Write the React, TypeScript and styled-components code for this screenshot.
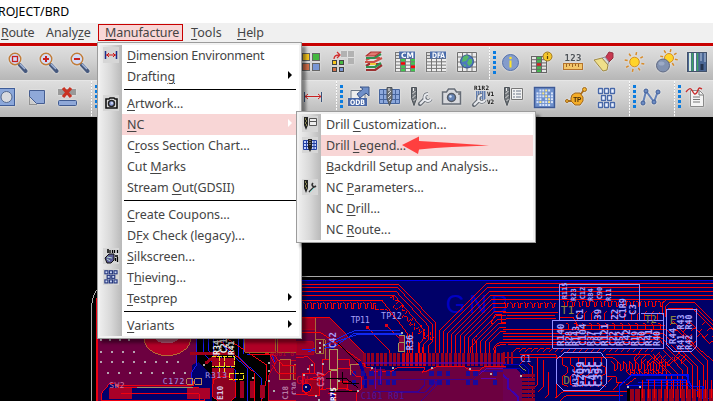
import React from "react";
import styled, { createGlobalStyle, css } from "styled-components";

const Global = createGlobalStyle`
  html, body { margin: 0; padding: 0; overflow: hidden; background: #000; }
  * { box-sizing: border-box; }
  svg { display: block; }
`;

const Window = styled.div`
  position: relative;
  display: flex;
  flex-direction: column;
  width: 713px;
  height: 401px;
  overflow: hidden;
  background: #000;
  font-family: "Noto Sans", "Open Sans", sans-serif;
  font-size: 12.5px;
  color: #444;
  white-space: nowrap;
`;

const TitleBar = styled.header`
  flex: none;
  height: 23px;
  background: #fff;
  color: #000;
  font-size: 12.3px;
  line-height: 23px;
  span { margin-left: -2px; }
`;

const MenuBar = styled.nav`
  flex: none;
  display: flex;
  align-items: flex-start;
  height: 20px;
  padding-top: 1px;
  background: #f0f0f0;
`;

const MenuTitle = styled.div<{ $width: number; $pad: number; $open?: boolean }>`
  width: ${(p) => p.$width}px;
  height: 17px;
  padding-left: ${(p) => p.$pad}px;
  line-height: 16px;
  border: 1px solid transparent;
  ${(p) =>
    p.$open &&
    css`
      border-color: #c80000;
      background: #f8d6d6;
    `}
`;

const RedRule = styled.div`
  flex: none;
  height: 3px;
  background: #c80000;
`;

const Toolbar = styled.div<{ $height: number }>`
  flex: none;
  display: flex;
  height: ${(p) => p.$height}px;
  border-top: 1px solid #e6e6e6;
  background: linear-gradient(#dedede, #d0d0d0 45%, #b6b6b6);
`;

const IconGroup = styled.div<{ $left: number }>`
  display: flex;
  flex: none;
  margin-left: ${(p) => p.$left}px;
`;

const Cell = styled.svg`
  flex: none;
  width: 31px;
  height: 34px;
  filter: drop-shadow(0 0 1px #ececec);
`;

const Divider = styled.div<{ $left: number }>`
  flex: none;
  width: 1px;
  margin-left: ${(p) => p.$left}px;
  background: repeating-linear-gradient(#fafafa 0 2px, #c4c4c4 2px 3px);
`;

const Handle = styled.div`
  flex: none;
  width: 3px;
  height: 24px;
  margin: 4px 0 0 3px;
  background: repeating-linear-gradient(#0a7ce0 0 3px, transparent 3px 5px);
`;

const Canvas = styled.svg`
  flex: none;
  width: 713px;
  height: 284px;
`;

const Popup = styled.div<{ $x: number; $y: number; $w: number }>`
  position: absolute;
  left: ${(p) => p.$x}px;
  top: ${(p) => p.$y}px;
  width: ${(p) => p.$w}px;
  padding: 2px;
  border: 1px solid #9c9c9c;
  background: #f2f2f2;
  box-shadow: 4px 4px 3px rgba(0, 0, 0, 0.42);
`;

const Items = styled.div<{ $gutter: number }>`
  background: linear-gradient(
    90deg,
    #ededed 0,
    #d8d8d8 ${(p) => p.$gutter * 0.5}px,
    #b9b9b9 ${(p) => p.$gutter}px,
    #fff ${(p) => p.$gutter}px
  );
`;

const Item = styled.div<{ $gutter: number }>`
  display: grid;
  grid-template-columns: ${(p) => p.$gutter}px 1fr;
  height: 21px;
  svg.glyph { margin: 2px 0 0 3px; }
`;

const ItemBody = styled.div<{ $hot?: boolean }>`
  display: flex;
  align-items: center;
  justify-content: space-between;
  padding: 1px 7px 0 5px;
  line-height: 20px;
  background: ${(p) => (p.$hot ? "#f8d6d6" : "transparent")};
`;

const Text = styled.span<{ $gap: number }>`
  letter-spacing: ${(p) => p.$gap}px;
`;

const Mnemonic = styled.span`
  text-decoration: underline;
  text-decoration-thickness: 1px;
  text-underline-offset: 2px;
`;

const Chevron = styled.div<{ $hot?: boolean }>`
  width: 0;
  height: 0;
  margin-top: -5px;
  border: 4px solid transparent;
  border-left: 4px solid ${(p) => (p.$hot ? "#fff" : "#000")};
  border-right: 0;
`;

const Separator = styled.div`
  height: 6px;
  padding: 2px 3px 0 24px;
  &::before { content: ""; display: block; height: 1px; background: #000; }
`;

const Pointer = styled.svg`
  position: absolute;
  left: 402px;
  top: 136px;
`;

function Label({ text, gap = -0.06 }: { text: string; gap?: number }) {
  const i = text.indexOf("&");
  return (
    <Text $gap={gap}>
      {text.slice(0, i)}
      <Mnemonic>{text[i + 1]}</Mnemonic>
      {text.slice(i + 2)}
    </Text>
  );
}

/* ---------- toolbar glyphs, 31x34 box centred on 15.5,16 ---------- */

const Lens = ({ mark }: { mark: React.ReactNode }) => (
  <>
    <path d="M19 18l5.500 6" stroke="#46597e" strokeWidth="4" strokeLinecap="round" />
    <path d="M19 17l5 5" stroke="#a4b6d8" strokeWidth="1.600" />
    <circle cx="14" cy="12" r="5.800" fill="#d3dcf6" stroke="#c07c38" strokeWidth="1.400" />
    {mark}
  </>
);

const GridTable = ({ title }: { title: string }) => (
  <>
    <rect x="6" y="5" width="20" height="20" fill="#777" />
    {[0, 1, 2, 3].map((r) =>
      [0, 1, 2, 3].map((c) => {
        const k = title === "CM" ? (c === 1 || c === 3 ? "#40c850" : "#eee") : "#eee";
        const red = title === "CM" && ((c === 1 && r === 1) || (c === 3 && r === 2));
        return <rect key={`${r}${c}`} x={7 + c * 5} y={12 + r * 3.300} width="4" height="2.300" fill={red ? "#f00" : k} />;
      })
    )}
    <path d="M7 6h3v2H7zM7 9h3v2H7z" fill="#ddd" />
    <rect x="10" y="4.500" width="16" height="7" fill="#4a6cab" />
    <text x="18.500" y="10.700" fontSize="7.500" fontWeight="700" fontFamily="DejaVu Sans, sans-serif" textAnchor="middle" fill="#fff" textLength="13" lengthAdjust="spacingAndGlyphs">
      {title}
    </text>
  </>
);

const Drill = ({ x = 7 }: { x?: number }) => (
  <g>
    <path d={`M${x} 6.500h5v11l-2.500 7-2.500-7z`} fill="#70757a" stroke="#4c5258" />
    <path d={`M${x + 1} 13l3-3M${x + 1} 17l3-3M${x + 2} 20l2-2`} stroke="#ddd" />
    <path d={`M${x + 2} 7v3`} stroke="#eee" />
  </g>
);

const Wrench = ({ x = 17, y = 12 }: { x?: number; y?: number }) => (
  <g transform={`translate(${x} ${y})`} fill="none">
    <path d="M1 11l5-5" stroke="#686e76" strokeWidth="4.400" strokeLinecap="round" />
    <path d="M9 1a3.500 3.500 0 1 0 3 5" stroke="#686e76" strokeWidth="3.400" />
    <path d="M1 11l5-5M9 1a3.500 3.500 0 1 0 3 5" stroke="#e8eaee" strokeWidth="2" />
  </g>
);

const Pads = () => (
  <g fill="#eef3ff" stroke="#4868a8" strokeWidth="1.400">
    {[0, 1, 2].map((r) =>
      (r === 1 ? [3, 9] : [0, 6, 12]).map((x) => (
        <rect key={`${r}${x}`} x={x + 0.500} y={r * 7 + 0.500} width="4" height="5" rx=".5" />
      ))
    )}
  </g>
);

const Ball = () => (
  <>
    <circle cx="13" cy="18.500" r="6.500" fill="#8292b0" stroke="#5d6780" />
    <ellipse cx="11.500" cy="16.500" rx="3" ry="2" fill="#9dabc6" />
  </>
);

const Rays = ({ cx, cy, r }: { cx: number; cy: number; r: number }) => (
  <>
    {[0, 45, 90, 135, 180, 225, 270, 315].map((a) => (
      <path key={a} transform={`rotate(${a + 12} ${cx} ${cy})`} d={`M${cx + r} ${cy}h3`} stroke="#d88a28" strokeWidth="1.500" />
    ))}
  </>
);

const icons: Record<string, React.ReactNode> = {
  zoomFit: <Lens mark={<rect x="11.500" y="9.500" width="5" height="5" fill="none" stroke="#c82020" strokeWidth="1.300" />} />,
  zoomIn: <Lens mark={<path d="M11 12h6M14 9v6" stroke="#c82020" strokeWidth="2" />} />,
  zoomOut: <Lens mark={<path d="M11 12h6" stroke="#c82020" strokeWidth="2" />} />,
  tiles: (
    <g stroke="#666">
      <rect x="6.500" y="6.500" width="7" height="7" fill="#f8c81c" /><rect x="16.500" y="6.500" width="7" height="7" fill="#45b840" />
      <rect x="6.500" y="16.500" width="7" height="7" fill="#d4704a" /><rect x="16.500" y="16.500" width="7" height="7" fill="#7896d4" />
    </g>
  ),
  moveTiles: (
    <g>
      <g fill="#b2b2b2"><rect x="14" y="4" width="6" height="6" /><rect x="21" y="4" width="6" height="6" /><rect x="21" y="11" width="6" height="6" /></g>
      <g stroke="#444"><rect x="5.500" y="13.500" width="4" height="4" fill="#f8c81c" /><rect x="12.500" y="13.500" width="4" height="4" fill="#45b840" />
      <rect x="5.500" y="20.500" width="4" height="4" fill="#d4704a" /><rect x="12.500" y="20.500" width="4" height="4" fill="#7896d4" /></g>
      <path d="M7 12c0-3 2-4 5-4M10 5l3 3-3 3" stroke="#d03030" strokeWidth="1.300" fill="none" />
    </g>
  ),
  layers: (
    <g fill="none" strokeLinejoin="round">
      <path d="M8 23h9l7-5M8 19l3-2h12" stroke="#9c3030" strokeWidth="2.200" />
      <path d="M8 20h9l6-4" stroke="#2d9150" strokeWidth="2.200" />
      <path d="M7 15h9l8-4M8 13l4-2h10" stroke="#cd5048" strokeWidth="2.200" />
      <path d="M12 17h6" stroke="#f0c83a" strokeWidth="2" />
      <path d="M8 11h8l7-4" stroke="#2d9150" strokeWidth="2.200" />
      <path d="M8 9l5-4h10l-6 4z" stroke="#b03434" fill="#e07a70" strokeWidth="1.200" />
    </g>
  ),
  cm: <GridTable title="CM" />,
  dfa: <GridTable title="DFA" />,
  globe: (
    <g>
      <path d="M6.500 5.500v19h19v-19zM6 10h20M6 15h20M6 20h20M11.500 6v18M16 6v18M21 6v18" fill="#ececec" stroke="#707070" />
      <circle cx="16" cy="14.500" r="6.500" fill="#4c79bd" stroke="#34558f" />
      <path d="M12 10l4-2 2 2-3 4-4 1zM18 12l3 0v4l-3 3-2-3zM12 17l3 1-1 2z" fill="#55b868" />
    </g>
  ),
  info: (
    <>
      <circle cx="15.500" cy="15.500" r="8" fill="#849ccb" stroke="#5470a8" />
      <circle cx="15.500" cy="11" r="1.300" fill="#ffe428" /><path d="M15.500 13.500v7" stroke="#ffe428" strokeWidth="2" />
    </>
  ),
  tableInfo: (
    <>
      <rect x="5" y="9" width="16" height="17" fill="#666" />
      {[0, 1, 2, 3, 4].map((r) => [0, 1, 2].map((c) => (
        <rect key={`${r}${c}`} x={6 + c * 5} y={10 + r * 3.200} width="4" height="2.200" fill={c === 1 ? (r === 2 ? "#e02020" : "#45b850") : "#e5e5e5"} />
      )))}
      <circle cx="21.500" cy="9.500" r="4.500" fill="#f5c62c" stroke="#9a7420" /><path d="M21.500 9v3M21.500 6.500v1" stroke="#543c08" strokeWidth="1.200" />
    </>
  ),
  ruler: (
    <>
      <text x="16" y="13.500" fontSize="9" fontWeight="700" fontFamily="DejaVu Sans Mono, monospace" textAnchor="middle" fill="#4e5358" textLength="17">123</text>
      <rect x="6.500" y="16.500" width="19" height="6" fill="#f3c66a" stroke="#b5732c" />
      <path d="M9.500 17v3M12.500 17v2M15.500 17v3M18.500 17v2M21.500 17v3" stroke="#9c6424" />
    </>
  ),
  brush: (
    <>
      <path d="M17 11l4-6 4 1 0 5-5 5z" fill="#c83850" stroke="#943040" />
      <path d="M14 11l3-1 4 5-2 4z" fill="#d8d8dc" stroke="#8a8a94" />
      <path d="M6 13l8-2 6 7-1 5-4 1z" fill="#efdf8a" stroke="#9e8844" />
    </>
  ),
  sun: <><Rays cx={15.500} cy={15} r={7} /><circle cx="15.500" cy="15" r="4.800" fill="#ffd42a" stroke="#d08c26" /></>,
  shade: <><Rays cx={19} cy={11} r={6} /><circle cx="19" cy="11" r="4.500" fill="#ffd42a" stroke="#d08c26" /><Ball /></>,
  bars: (
    <g>
      <rect x="6.500" y="5.500" width="19" height="19" fill="#4b6795" stroke="#43526a" />
      <path d="M9 6v18" stroke="#d8ecdf" strokeWidth="2" /><path d="M11.500 6v18M16.500 6v18" stroke="#40a060" strokeWidth="1.500" />
      <path d="M14 6v18" stroke="#eef" strokeWidth="2" /><path d="M20 6v8M24 6v9" stroke="#8197ba" strokeWidth="2" /><path d="M21 17v6" stroke="#25344e" strokeWidth="3" />
    </g>
  ),
  circleBox: <><rect x="7.500" y="7.500" width="16" height="17" fill="#8ba7da" stroke="#3f5d99" /><circle cx="15.500" cy="16" r="5.500" fill="#d8dadf" stroke="#54698f" /></>,
  note: <><path d="M7.500 9.500h15v13h-8l-7-7z" fill="#8fa8d8" stroke="#455d91" /><path d="M7.500 15.500v8h8" fill="none" stroke="#555" strokeDasharray="1 1" /></>,
  removeShape: (
    <>
      <rect x="5" y="8" width="18" height="6" fill="#999" />
      <path d="M10 7l8 9M18 7l-8 9" stroke="#c93222" strokeWidth="3.200" />
      <rect x="5.500" y="19.500" width="18" height="5" rx="1" fill="#8fa8d8" stroke="#3f5a90" />
    </>
  ),
  dimension: <><path d="M7.500 11v10M24.500 11v10" stroke="#39547c" /><path d="M8 15.500h16M11 13l-3 2.500 3 2.500M21 13l3 2.500-3 2.500" stroke="#c82020" fill="none" /></>,
  odb: (
    <>
      <path d="M8 9.500h14v15H8z" fill="#eee" stroke="#6c7888" />
      <path d="M14 13l6-5-3-2h9v9l-3-3-6 5z" fill="#6f8fc8" stroke="#3c5688" />
      <rect x="5" y="17" width="19" height="8" fill="#4767a8" />
      <text x="14.500" y="23.800" fontSize="7.500" fontWeight="700" fontFamily="DejaVu Sans, sans-serif" textAnchor="middle" textLength="15" lengthAdjust="spacingAndGlyphs" fill="#fff">ODB</text>
    </>
  ),
  drillBox: <><path d="M5.500 8.500h20v14h-20zM5 13.500h21M5 18.500h21M9.500 8v15M21.500 8v15" fill="#8ca8dc" stroke="#46659e" /><Drill x={13} /></>,
  drillWrench: <><Drill x={6.500} /><Wrench x={14} y={12} /></>,
  camera: (
    <g>
      <path d="M6.500 11h4l2-3h6l2 3h4v12h-18z" fill="#d9dade" stroke="#666c76" strokeWidth="1.500" />
      <circle cx="15.500" cy="16.500" r="4" fill="#6683b4" stroke="#555b65" strokeWidth="1.500" /><circle cx="14.500" cy="15.500" r="1.200" fill="#d7e6fc" />
      <path d="M22 13h2" stroke="#444" />
    </g>
  ),
  silk: (
    <g>
      <path d="M9 11h10M9 13h10M9 15h10M9 17h10M9.500 10v11M11.500 10v11M13.500 10v11M15.500 10v11M17.500 10v11" stroke="#4b6da8" strokeWidth=".8" />
      <Wrench x={6} y={13} />
      <g fontSize="6" fontWeight="700" fontFamily="DejaVu Sans Mono, monospace" fill="#111"><text x="7" y="9" textLength="15">R1R2</text><text x="20" y="15" textLength="7">V1</text><text x="20" y="23" textLength="7">V2</text></g>
    </g>
  ),
  drillDoc: <><Drill x={6.500} /><path d="M13.500 7.500h11v11h-11z" fill="#f2f2f2" stroke="#777" /><path d="M15 10h2M18 10h5M15 13h2M18 13h5M15 16h2M18 16h5" stroke="#6d7788" /></>,
  matrix: (
    <>
      <rect x="5.500" y="6.500" width="20" height="20" fill="#6f91cd" stroke="#3e5a96" strokeWidth="1.500" />
      {Array.from({ length: 36 }, (_, i) => (
        <rect key={i} x={7.500 + (i % 6) * 2.900} y={8.500 + Math.floor(i / 6) * 2.900} width="2" height="2" fill={[3, 8, 15, 22, 25, 28].includes(i) ? "#ffe97a" : i % 5 === 0 ? "#6f91cd" : "#d9e4fa"} />
      ))}
    </>
  ),
  testPoint: (
    <>
      <path d="M6 20h5M20 14l4-5" stroke="#a86d1e" strokeWidth="2" /><circle cx="24.500" cy="8.500" r="2" fill="#f4b733" stroke="#9e651c" /><circle cx="7" cy="20" r="1.500" fill="#f4b733" stroke="#9e651c" />
      <path d="M12 14l3-2h5l3 4v4l-3 4h-5l-4-4v-3z" fill="#f4ad28" stroke="#9e651c" />
      <text x="17.300" y="20.500" fontSize="6.500" fontWeight="700" fontFamily="Liberation Sans, sans-serif" textAnchor="middle" fill="#4b2e08">TP</text>
    </>
  ),
  pads: <g transform="translate(7 7)"><Pads /></g>,
  net: <><path d="M8 22l3-12 8 11 4-11" fill="none" stroke="#6381b8" strokeWidth="2" /><g fill="#6c8bc2" stroke="#415f99"><circle cx="8" cy="22" r="2" /><circle cx="11" cy="10" r="2" /><circle cx="19" cy="21" r="2" /><circle cx="23" cy="11" r="2" /></g></>,
  report: <><path d="M10.500 9.500h9l4 4v12h-13z" fill="#f4f4f4" stroke="#8a8a8a" /><path d="M19 10v4h4M13 16h7M13 18.500h7M13 21h7" stroke="#777" fill="none" /><path d="M6 11c4-5 5-4 7 0s4 1 5-2 2-2 4-1" stroke="#c83030" strokeWidth="1.400" fill="none" /></>,
};

const Icons = ({ names, left }: { names: string[]; left: number }) => (
  <IconGroup $left={left}>
    {names.map((n) => (
      <Cell key={n} viewBox="0 0 31 34">{icons[n]}</Cell>
    ))}
  </IconGroup>
);

/* ---------- 16px menu glyphs ---------- */

const DrillMini = () => (
  <><path d="M2 1h4v8l-2 5-2-5z" fill="#222" /><path d="M3 3h1M4 5h1M3 7h1M4 9h1" stroke="#e8e27a" /></>
);

const menuGlyphs: Record<string, React.ReactNode> = {
  dim: <><path d="M2.500 4v8M13.500 4v8" stroke="#1c2c88" strokeWidth="1.500" /><path d="M3 8h10M6 6L4 8l2 2M10 6l2 2-2 2" stroke="#d01010" fill="none" /></>,
  art: <><path d="M3 4h3l1-1h4l1 1h2v9H3z" fill="#ddd" stroke="#111" strokeWidth="1.600" /><circle cx="8.500" cy="8.500" r="3" fill="#90a0d8" stroke="#222" strokeWidth="1.500" /><path d="M8 8h2" stroke="#fff" /></>,
  silk: <><path d="M4 2h2M4 4h2M7 2v3M9.500 2v3M11.500 2v3M14.500 2v3M12 8h3M14.500 9v5M12.500 10v3" stroke="#000" strokeWidth="1.300" /><path d="M2 10l4-4 5 0v6l-3 3H4z" fill="#5b5b95" stroke="#111" /><path d="M4 9l5 1M4 11l3 2" stroke="#b5e0d0" /></>,
  pads: <g transform="translate(1.500 1) scale(.76)" fill="#cbd7f5" stroke="#24367e" strokeWidth="1.500">{[0, 1, 2].map((r) => (r === 1 ? [3, 9] : [0, 6, 12]).map((x) => <rect key={`${r}${x}`} x={x + 0.500} y={r * 6 + 1} width="4" height="4" />))}</g>,
  custom: <><DrillMini /><path d="M7.500 2.500h7v7h-7zM7 5.500h8" fill="#eee" stroke="#555" /></>,
  legend: <><path d="M1.500 3.500h13v9h-13zM1 6.500h14M1 9.500h14M4.500 3v10M12 3v10" fill="#c4d2ff" stroke="#2340a0" /><path d="M6 2h4v9l-2 4-2-4z" fill="#222" /><path d="M8 3v6" stroke="#bbb" strokeDasharray="1 1" /></>,
  params: <><DrillMini /><path d="M7 13l5-5M11 4c-2 2 0 5 3 3" stroke="#333" strokeWidth="1.600" fill="none" /><path d="M8 13l4-4" stroke="#79d2cb" /></>,
};

type Entry = { text?: string; glyph?: string; sub?: boolean; hot?: boolean; gap?: number };

const manufacture: Entry[] = [
  { text: "&Dimension Environment", glyph: "dim", gap: -0.22 },
  { text: "Draftin&g", sub: true },
  {},
  { text: "&Artwork...", glyph: "art" },
  { text: "&NC", sub: true, hot: true },
  { text: "C&ross Section Chart..." },
  { text: "Cut &Marks" },
  { text: "Stream &Out(GDSII)" },
  {},
  { text: "&Create Coupons..." },
  { text: "D&Fx Check (legacy)..." },
  { text: "&Silkscreen...", glyph: "silk" },
  { text: "T&hieving...", glyph: "pads" },
  { text: "&Testprep", sub: true },
  {},
  { text: "&Variants", sub: true },
];

const numericControl: Entry[] = [
  { text: "Drill &Customization...", glyph: "custom" },
  { text: "Drill &Legend...", glyph: "legend", hot: true },
  { text: "&Backdrill Setup and Analysis..." },
  { text: "NC &Parameters...", glyph: "params" },
  { text: "NC &Drill..." },
  { text: "NC &Route..." },
];

const Menu = ({ entries, gutter }: { entries: Entry[]; gutter: number }) => (
  <Items $gutter={gutter}>
    {entries.map((e, i) =>
      e.text ? (
        <Item key={i} $gutter={gutter}>
          {e.glyph ? (
            <svg className="glyph" width="16" height="16" viewBox="0 0 16 16">
              <rect width="16" height="16" fill="#d6d6d6" />
              {menuGlyphs[e.glyph]}
            </svg>
          ) : (
            <span />
          )}
          <ItemBody $hot={e.hot}>
            <Label text={e.text} gap={e.gap} />
            {e.sub && <Chevron $hot={e.hot} />}
          </ItemBody>
        </Item>
      ) : (
        <Separator key={i} />
      )
    )}
  </Items>
);

/* ---------- board artwork; each region uses a 3x sub-pixel grid ---------- */

const range = (n: number) => Array.from({ length: n }, (_, i) => i);

const meander = (x: number, y: number, n: number, w: number, h: number) =>
  range(n)
    .map((i) => `M${x + i * w} ${y}l6 4v${h - 4}h5M${x + i * w + w * 0.6} ${y + h - 3}v${-h + 6}h5`)
    .join("");

const VText = ({ x, y, s, children, c = "#a8a2ff" }: { x: number; y: number; s: number; children: string; c?: string }) => (
  <text transform={`translate(${x} ${y}) rotate(-90)`} fontSize={s} fontWeight="700" fill={c} stroke="none">{children}</text>
);

const LeftBoard = () => (
  <g transform="translate(90 265) scale(.33333)" strokeWidth="3" fill="none">
    <path d="M6 408V115q3-30 18-45" stroke="#aaa" />
    <path d="M18 220H630V408H18z" fill="#6c0040" />
    <path d="M21 408V100" stroke="#f00010" strokeWidth="4" />
    <path d="M162 220a70 52 0 0 0 140 0z" fill="#b40028" stroke="#b86a32" />
    <path d="M195 220a38 22 0 0 0 72 0z" fill="#b65c78" />
    <g fill="#b5a4b0">
      {range(8).map((c) => (
        <g key={c}>
          {c < 4 && <rect x={30 + c * 28} y="223" width="6" height="6" />}
          {c < 5 && c !== 4 && <rect x={30 + c * 33} y="257" width="6" height="6" />}
          <rect x={30 + c * 33} y="288" width="6" height="6" />
          <rect x={50 + c * 33} y="320" width="6" height="6" />
        </g>
      ))}
    </g>
    <path d="M322 220H470V262H540V408H322V330z" fill="#000" />
    <path d="M305 300l20-8 40 40v76h-60z" fill="#00006c" />
    <path d="M36 408v-25l22-27h15l12 12h240l20 18v22z" fill="#00006c" stroke="#f00010" />
    <path d="M57 370h69v31H57zM290 370h70v31h-70z" fill="#a80028" />
    <path d="M93 387h235v21M75 362h235v-15" stroke="#f00010" /><path d="M140 367h170" stroke="#98966a" />
    <path d="M320 220v80l-15 22v35M340 220v45l50 48v95M355 220v35l45 50v103M372 220v38l65 60v80M402 220v25l70 65v98M445 220v55l70 65v68M460 220v48M470 268h75l15 35h60" stroke="#1818f4" />
    <path d="M388 225l75 70 30 28v85M410 220l120 80v40l-15 68M470 250l70 18 20 45 70 10" stroke="#f00010" />
    <path d="M465 220h92v42h-92zM562 220h68v42h-68z" fill="#b00026" stroke="#a36024" />
    <path d="M300 265h135" stroke="#a00018" strokeWidth="9" />
    <path d="M346 295l35-25" stroke="#a00018" strokeWidth="9" />
    <path d="M366 278h70v26h-70zM365 308h68v60h-68zM450 347h12v52h-12zM480 347h12v52h-12zM510 360h16v40h-16z" fill="#a00020" />
    <path d="M370 345l18-10h30l18 15v45l-15 14h-35l-20-15z" fill="#8c0020" stroke="#f00010" />
    <path d="M366 276h68v30h-68M388 276v44M405 276v45M418 325h43v20h-43z" stroke="#f1df20" strokeDasharray="13 3" />
    <path d="M535 408v-75l25-45h70v120z" fill="#6c0040" stroke="#d00018" />
    <path d="M570 285h32v60h-32zM612 300h18v44h-18z" fill="#a00020" stroke="#b86a32" />
    <path d="M290 342h18v16h-18zM315 342h20v16h-20z" stroke="#b98758" />
    <path d="M480 268h70l30 35h50M548 300l15 25h67" stroke="#f00010" />
    <g fontFamily="DejaVu Sans Mono, monospace" fontSize="24" fill="#a79be6">
      <text x="58" y="368" textLength="46" fill="#cf79a5">SW2</text><text x="218" y="357" textLength="65">C172</text><text x="346" y="340" textLength="65">R313</text>
      <VText x={390} y={270} s={25} c="#eee">R34</VText><VText x={410} y={265} s={25} c="#eee">C21</VText><VText x={431} y={270} s={24} c="#eee">R41</VText>
      <VText x={398} y={405} s={24} c="#d8c8e8">E10</VText><VText x={594} y={404} s={23} c="#b77aa4">C18</VText><VText x={621} y={390} s={22} c="#b77aa4">C30</VText>
      <text x="540" y="272" fill="#c00024" fontSize="20">0001 0</text>
    </g>
    <g fill="#aaa"><path d="M340 298h6v6h-6zM410 237h6v6h-6zM535 291h6v6h-6zM535 315h6v6h-6zM535 344h6v6h-6zM550 375h6v6h-6zM487 335h6v6h-6z" /></g>
  </g>
);

const CentreBoard = () => (
  <g transform="translate(296 265) scale(.33333)" strokeWidth="3" fill="none">
    <path d="M0 46h630v362H0z" fill="#000068" />
    <path d="M0 46h630" stroke="#0000e8" />
    <text x="450" y="143" fontFamily="Liberation Sans, sans-serif" fontSize="75" textLength="190" fill="#0000c4">GND</text>
    <path d="M0 157h100l105 108v42l95 10h90l20-10h220v101H0z" fill="#6c0040" />
    <path d="M0 160h58v35H0M0 230h52v40H0z" fill="#a00026" stroke="#b00020" />
    <path d="M60 160v65M58 225h30v60" stroke="#a86838" />
    <g stroke="#f80000">
      <path d="M18 58H308L418 172v93M18 67H304L410 180v50l-12 12v23M18 79H300L398 184v40l-14 12v29M18 92H296L384 195v25l-12 14v31M18 106h240l77 100v59M18 157h82l105 108M0 203h75l120 85" />
      <path d={meander(22, 112, 11, 20, 20)} />
      <path d="M238 120v15h35l25 26M281 100l12-8v12l16 5-18 16 10 9 20-15v18l12 2-15 19 16-5v17l17-9-12 22 17-9v22l20-15-8 25 18-12v28l17-20v24l12-10" strokeDasharray="11 4" />
      <path d="M214 188l66 68v15M271 182l46 46v20M317 260v-60M340 265v-58M326 220v45M350 265v-65M368 265v-33M380 265v-20" />
      {range(13).map((i) => {
        const x = 430 + i * 12.500;
        const top = 55 + i * 12;
        const bend = Math.min(198 + i * 3, 252);
        return <path key={i} d={`M${x} 265V${bend}L${x + bend - top} ${top}H630`} />;
      })}
      <path d="M525 265v-20l15-15-8-9 10-8M595 265q-10-35 35-33M600 265v-19q4-8 30-7M595 175l-10 0 12-25h20v24h13" />
    </g>
    <path d="M18 255l45-4 110-53h140M35 260l85-18 55-37h140M120 230l60-20h138" stroke="#1028f0" />
    <path d="M125 233l75 75" stroke="#000" />
    {range(33).map((i) => <rect key={i} x={200 + i * 13} y="265" width="9" height="39" fill={i > 8 && i < 15 ? "#c60014" : "#950020"} />)}
    <path d="M205 295h425" stroke="#5a00b4" strokeWidth="5" opacity=".7" />
    <path d="M180 295h25v10l25 4-10 12h65l18-13h85l-10 14 18-5 25-11h85l15 10h30l12-10h77" stroke="#f00010" />
    <path d="M110 240v168M190 290l20 50v30" stroke="#0000a0" strokeWidth="9" />
    <path d="M205 343h325l25-25h75M230 380h135l20-20v-15M300 383h85l30-27v-12M375 408l45-45v-15" stroke="#3a0090" strokeWidth="4" />
    {[167, 195, 220, 245, 270, 288, 400, 424, 450, 510, 532, 590].map((x) => <g key={x} fill="#180a9c"><rect x={x} y="318" width="13" height="14" /><rect x={x} y="346" width="13" height="13" /></g>)}
    <path d="M238 306v65M255 306v50M548 330l25-20h57M555 340h45" stroke="#6000b0" />
    <g stroke="#f00010">
      <path d="M0 278l35-3 20 20v30H20v55l25 5 35-15V283h80v20M18 360l23-18 45-12 25-20h50l20 25h15v35l-15 15v30M40 300v25l50 5M0 390h35l15-13 40-5h60l25 8M95 385h25v23" />
      <path d="M30 343h40v50H40l-20-15zM110 350h45v20h-45z" fill="#980020" />
      <circle cx="32" cy="368" r="14" fill="#000068" />
    </g>
    <path d="M100 255h25v60h-25zM105 318h20v55h-20z" fill="#86003c" stroke="#b4a060" />
    <path d="M90 340h60l35 28M100 380h85M140 320v35h50" stroke="#000" />
    <path d="M60 225h24v40H60z" fill="#760030" stroke="#a26c30" />
    <path d="M309 213h18v20h-18M309 233h18v27h-18z" fill="#86003c" stroke="#9d9b60" />
    <path d="M163 330v-32h25" stroke="#b08050" />
    <g fontFamily="DejaVu Sans Mono, monospace" fontSize="25" fill="#a6a0f8">
      <text x="164" y="174" textLength="57">TP11</text><text x="255" y="163" textLength="62">TP12</text>
      <VText x={121} y={250} s={27}>C42</VText><VText x={350} y={256} s={26}>R36</VText>
      <VText x={120} y={408} s={23} c="#fff">R75</VText><VText x={84} y={366} s={26} c="#c06a9a">C37</VText>
      <text x="195" y="403" fill="#4818a0" textLength="130">C101 R01</text>
      <text x="0" y="358" fill="#d00020" fontSize="30">GN</text>
    </g>
    <g fill="#e00018"><path d="M210 183h9v9h-9zM267 177h9v9h-9z" /></g>
    <g fill="#b4b0b4">{[[70, 230], [70, 245], [81, 238], [70, 259], [225, 306], [288, 306], [405, 306], [518, 309], [582, 324], [183, 375], [32, 310], [45, 297], [22, 327], [78, 294], [58, 390], [66, 402], [315, 201], [27, 363], [126, 345]].map(([x, y], i) => <rect key={i} x={x} y={y} width="6" height="6" />)}</g>
  </g>
);

const RightBoard = () => (
  <g transform="translate(503 265) scale(.33333)" strokeWidth="3" fill="none">
    <path d="M9 46h621v362H9z" fill="#000068" />
    <path d="M0 46h630" stroke="#0000e8" />
    <g stroke="#f80000">
      {[55, 67, 79, 91, 103].map((y) => <path key={y} d={`M0 ${y}h630`} />)}
      <path d={meander(2, 112, 8, 20, 17)} /><path d={meander(180, 108, 14, 22, 17)} />
      <path d="M0 142h165M12 152h145M10 160h150M170 157h40l15 25h260M0 193h490l25 25M0 205h480l25 22M0 214h470l28 26M0 223h470l10 15M0 232h445M15 239h440" />
      <path d="M480 150V115l12-12h138M487 155v-28l12-15h75l56 55M495 132h75l60 60M580 130l50 50M520 195l110 92" />
      {range(9).map((i) => <path key={i} d={`M${500 + i * 16} ${180 + (i % 3) * 18}l12-10 28 30 10-9`} />)}
      {range(13).map((i) => <path key={`a${i}`} d={`M${225 + i * 20} 168v-22l7-7M${190 + i * 23} 174l8 5v14`} />)}
      {range(24).map((i) => <path key={`b${i}`} d={`M${30 + i * 18} 260l10-10h10`} />)}
      <path d="M50 270h110v130M65 268v15l-15 14M105 280v78l-16 14v36M122 285v80l-15 15M138 320v65l-10 13M75 295l15 12v40M155 400l25-20h200M170 408l20-17h170" />
      {range(6).map((i) => <path key={`c${i}`} d={`M${180 + i * 23} 280v20l13 7v18l-13 8v26l15 5`} />)}
      {range(9).map((i) => <path key={`d${i}`} d={`M${325 + i * 18} 290l9 8v19l9-5v-20`} />)}
      <path d="M310 335h30v17h25M315 350l12-12M330 375l20-22M350 365l20-20M370 360l30-22M0 278h330l15 12M310 268h130l50 50v70M450 268l55 60v60M465 265l60 63v60M480 255l60 62v75M490 248l65 60v85M505 242l65 60v92M520 240l65 65v90M535 235l66 65v90M550 225l65 63v105" />
      {range(8).map((i) => <path key={`e${i}`} d={`M${410 + i * 20} ${262 + (i % 3) * 7}l-15 15v12l15-14M${370 + i * 14} 320l12 10v-18`} />)}
    </g>
    <path d="M350 408v-45l35-33h165l15 35h35v35h30M372 362h185l15 15h30M405 353h150v-25M430 345h120" stroke="#000cf0" strokeWidth="4" />
    <path d="M0 310h40l16 20v78H0z" fill="#6c0050" /><path d="M0 298h62l15 15v95M0 310h50l20 20" stroke="#0000c0" /><path d="M0 330l16 14v25l30 28v11" stroke="#3c00b0" strokeWidth="6" />
    {range(7).map((i) => <path key={i} d={`M57 ${328 + i * 12}h39v8H57z`} fill="#86002a" />)}
    {[0, 12, 24].map((x) => <rect key={x} x={x} y="262" width="7" height="34" fill="#a0001c" />)}
    <path d="M372 372h20v36h-20zM400 372h22v36h-22z" fill="#000" />
    {range(15).map((i) => <rect key={i} x={380 + i * 17} y="372" width="13" height="36" fill="#98001c" />)}
    {range(12).map((i) => <path key={i} d={`M${418 + i * 19} 400v-55`} stroke="#f80000" />)}
    <g stroke="#938fff">
      <path d="M170 58h240v108H170zM149 166h334v84H149zM413 145h69v21M490 133h90v112l-14 15h-55l-21-23zM183 264h110l17 19v74l-21 19H180l-19-19v-74z" />
    </g>
    <g fontFamily="DejaVu Sans Mono, monospace">
      {["R115", "R23", "C12", "R84", "C90", "R11"].map((t, i) => <VText key={t} x={193 + i * 26} y={i % 2 ? 108 : 103} s={21}>{t}</VText>)}
      {["C1", "39", "22"].map((t, i) => <VText key={t} x={240 + i * 53} y={164} s={27}>{t}</VText>)}<VText x={370} y={160} s={25}>C1R9</VText><VText x={399} y={150} s={27}>C3</VText>
      {["R140", "R28", "R143", "C104", "R37", "C81", "R121", "C22", "R52", "C42", "R19", "C20", "R41", "R40"].map((t, i) => <VText key={t} x={184 + i * 22} y={243} s={i % 3 ? 25 : 28}>{t}</VText>)}
      {["H32C", "G209", "C73C", "C45C", "C39C"].map((t, i) => <VText key={t} x={225 + i * 18} y={366} s={i ? 32 : 23}>{t}</VText>)}
      <VText x={519} y={237} s={27}>R44</VText><VText x={542} y={254} s={25}>R41 R43</VText><VText x={566} y={254} s={25}>R42 R40</VText>
      <g fill="#8e873f" fontSize="34"><text x="173" y="148">T1</text><text x="425" y="174" fontSize="30">T2</text><text x="500" y="176">E</text><text x="181" y="356">D</text></g>
      <text x="52" y="292" fontSize="27" fill="#9d96f0">C1</text>
    </g>
    <g fill="#bbb"><path d="M372 363h6v6h-6zM408 363h6v6h-6zM51 330h6v6h-6z" /></g>
    <path d="M48 300l20 18" stroke="#9b963f" />
  </g>
);

export default function App() {
  return (
    <>
      <Global />
      <Window>
        <TitleBar><span>ROJECT/BRD</span></TitleBar>
        <MenuBar>
          <MenuTitle $width={45} $pad={0}><Label text="&Route" gap={-0.3} /></MenuTitle>
          <MenuTitle $width={53} $pad={0}><Label text="Analy&ze" /></MenuTitle>
          <MenuTitle $width={85} $pad={6} $open><Label text="&Manufacture" gap={-0.1} /></MenuTitle>
          <MenuTitle $width={46} $pad={7}><Label text="&Tools" gap={0.1} /></MenuTitle>
          <MenuTitle $width={46} $pad={7}><Label text="&Help" gap={-0.1} /></MenuTitle>
        </MenuBar>
        <RedRule />
        <Toolbar $height={34}>
          <Icons left={1} names={["zoomFit", "zoomIn", "zoomOut"]} />
          <Icons left={202} names={["tiles", "moveTiles", "layers", "cm", "dfa", "globe"]} />
          <Divider $left={7} /><Handle />
          <Icons left={-1} names={["info", "tableInfo", "ruler", "brush", "sun", "shade", "bars"]} />
        </Toolbar>
        <Toolbar $height={37}>
          <Icons left={-9} names={["circleBox", "note", "removeShape"]} />
          <Divider $left={7} /><Handle />
          <Icons left={199} names={["dimension"]} />
          <Divider $left={8} /><Handle />
          <Icons left={0} names={["odb", "drillBox", "drillWrench", "camera", "silk", "drillDoc", "matrix", "testPoint", "pads"]} />
          <Divider $left={7} /><Handle />
          <Icons left={-1} names={["net"]} />
          <Divider $left={8} /><Handle />
          <Icons left={-1} names={["report"]} />
        </Toolbar>
        <Canvas viewBox="0 117 713 284" shapeRendering="crispEdges">
          <rect y="117" width="713" height="284" fill="#000" />
          <path d="M98 276.500H713" stroke="#a8a8a8" />
          <LeftBoard />
          <CentreBoard />
          <RightBoard />
        </Canvas>
        <Popup $x={97} $y={42} $w={205}>
          <Menu entries={manufacture} gutter={22} />
        </Popup>
        <Popup $x={296} $y={111} $w={240}>
          <Menu entries={numericControl} gutter={22} />
        </Popup>
        <Pointer width="90" height="20" viewBox="0 0 90 20">
          <path d="M0 9L17 .5v4.500c12 .5 22 1.200 33 2l37 2.500-37 1.500c-12 .6-22 1.500-33 2.500l-1 4.500z" fill="#ff3f3f" />
        </Pointer>
      </Window>
    </>
  );
}
